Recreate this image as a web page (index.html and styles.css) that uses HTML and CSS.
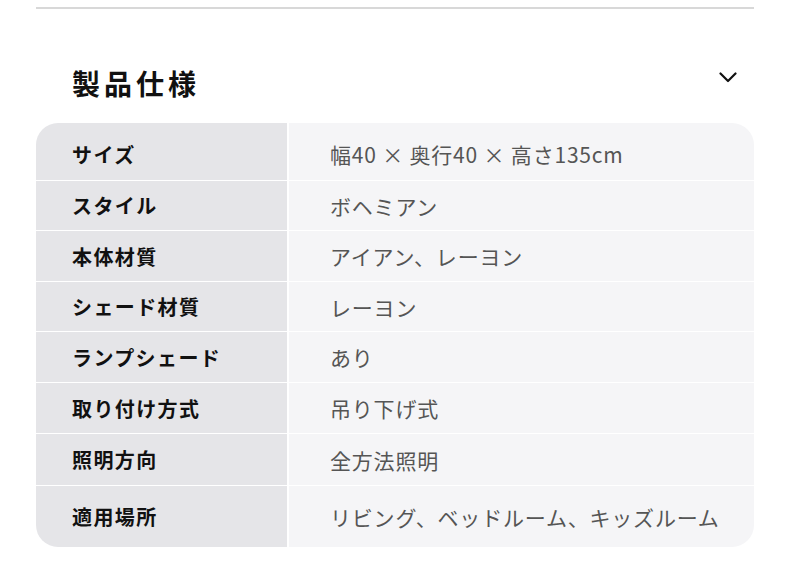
FILE: index.html
```html
<!DOCTYPE html>
<html lang="ja">
<head>
<meta charset="utf-8">
<link rel="stylesheet" href="styles.css">
</head>
<body>
<div class="page">
  <div class="rule"></div>
  <div class="header">
    <h2 class="title">製品仕様</h2>
    <svg class="chevron" width="18" height="11" viewBox="0 0 18 11"><path d="M1.5 1.5 L9 9 L16.5 1.5" fill="none" stroke="#111" stroke-width="2.2" stroke-linecap="round" stroke-linejoin="round"/></svg>
  </div>
  <div class="specs">
    <div class="label">サイズ</div><div class="value">幅40 × 奥行40 × 高さ135cm</div>
    <div class="label">スタイル</div><div class="value">ボヘミアン</div>
    <div class="label">本体材質</div><div class="value">アイアン、レーヨン</div>
    <div class="label">シェード材質</div><div class="value">レーヨン</div>
    <div class="label">ランプシェード</div><div class="value">あり</div>
    <div class="label">取り付け方式</div><div class="value">吊り下げ式</div>
    <div class="label">照明方向</div><div class="value">全方法照明</div>
    <div class="label">適用場所</div><div class="value">リビング、ベッドルーム、キッズルーム</div>
  </div>
</div>
</body>
</html>
```

FILE: styles.css
```css
html, body {
  margin: 0;
  padding: 0;
  background: #ffffff;
}
body {
  font-family: "Noto Sans CJK JP", "Noto Sans", sans-serif;
  color: #111;
}
.page {
  padding: 0 36px;
}
.rule {
  margin-top: 7px;
  height: 2px;
  background: #d8d8d8;
}
.header {
  display: flex;
  justify-content: space-between;
  align-items: flex-start;
  margin-top: 54px;
  height: 40px;
  padding-left: 36px;
  padding-right: 17px;
}
.title {
  margin: 0;
  font-size: 28px;
  line-height: 40px;
  font-weight: 700;
  letter-spacing: 4px;
}
.chevron {
  margin-top: 9px;
  display: block;
}
.specs {
  margin-top: 20px;
  display: grid;
  grid-template-columns: 251px 1fr;
  grid-template-rows: 57px 49px 50px 49px 50px 50px 51px 61px;
  column-gap: 2px;
  row-gap: 1px;
  background: #ffffff;
  border-radius: 22px;
  overflow: hidden;
}
.label, .value {
  display: flex;
  align-items: center;
}
.label {
  background: #e5e5e8;
  padding-left: 36px;
  font-size: 20px;
  letter-spacing: 1.4px;
  font-weight: 700;
  color: #111;
}
.value {
  background: #f5f5f7;
  padding-left: 41px;
  font-size: 21px;
  letter-spacing: 0.8px;
  color: #555;
}
.label:first-child, .label:first-child + .value {
  padding-top: 5px;
}
```
